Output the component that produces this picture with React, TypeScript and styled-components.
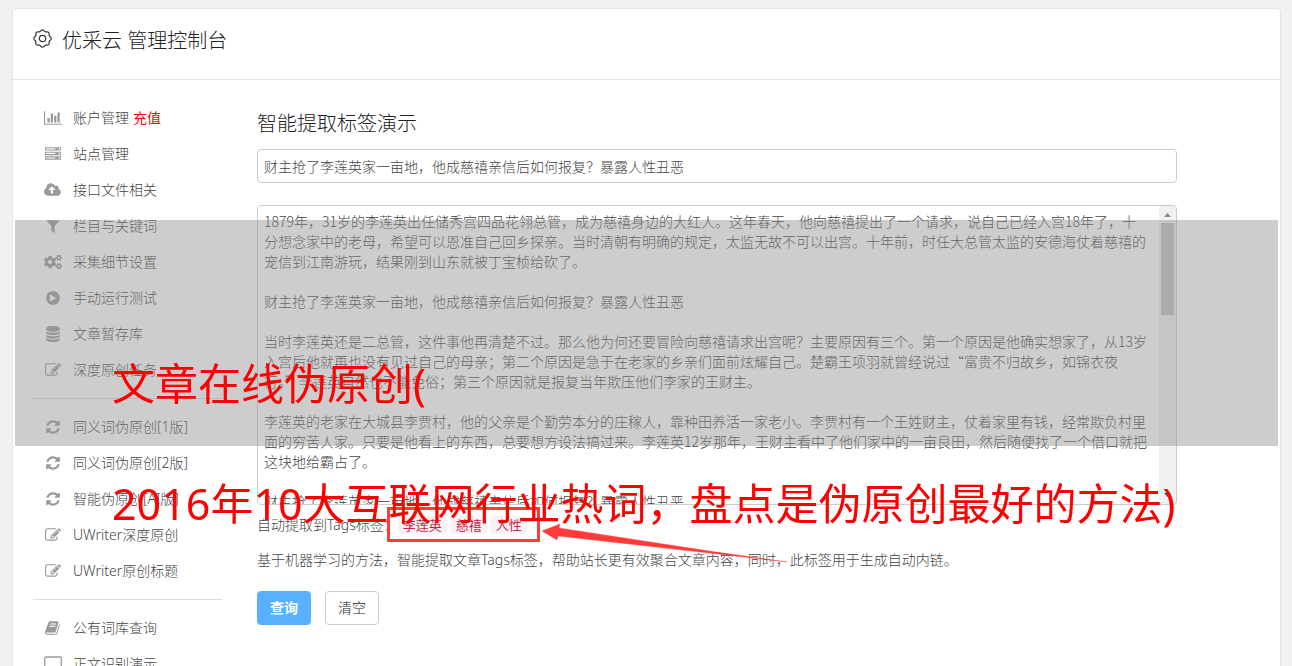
import React from "react";
import styled, { createGlobalStyle } from "styled-components";
import { FaCogs } from "react-icons/fa";

const latinFirst = `"Noto Sans", "Noto Sans CJK SC", sans-serif`;
const hanFirst = `"Noto Sans CJK SC", sans-serif`;

const GlobalStyle = createGlobalStyle`
  * { box-sizing: border-box; }
  html { background: #f1f1f1; }
  body {
    margin: 0;
    height: 100vh;
    overflow: hidden;
    font: 300 14px/20px ${latinFirst};
    color: #444;
  }
  button, input, textarea { font: inherit; color: inherit; }
`;

const Page = styled.div`
  position: relative;
  padding: 8px 11px 0 12px;
`;

const Panel = styled.div`
  background: #fff;
  border: 1px solid #e4e4e4;
  border-radius: 4px;
`;

const Header = styled.header`
  display: flex;
  align-items: flex-start;
  gap: 10px;
  height: 71px;
  padding: 20px;
  border-bottom: 1px solid #e4e4e4;
`;

const Title = styled.h1`
  margin: 0;
  font-size: 20px;
  line-height: 24px;
  font-weight: 300;
  color: #222;
`;

const Columns = styled.div`
  display: flex;
  align-items: flex-start;
  gap: 35px;
  padding: 20px;
`;

const Sidebar = styled.nav`
  flex: none;
  width: 189px;
`;

const Group = styled.ul`
  list-style: none;
  margin: 0;
  padding: 0;

  & + & {
    margin-top: 10px;
    padding-top: 10px;
    border-top: 1px solid #ddd;
  }
`;

const Item = styled.a`
  display: flex;
  align-items: center;
  gap: 10px;
  height: 36px;
  padding-left: 10px;
  color: #444;
  text-decoration: none;
  white-space: pre;
`;

const IconCell = styled.span`
  display: flex;
  justify-content: center;
  width: 20px;
  color: #999;
`;

const Hot = styled.span`
  margin-left: -6px;
  color: #f00;
  font-weight: 400;
`;

const Main = styled.main`
  flex: 1;
  min-width: 0;
  padding-right: 83px;
`;

const Heading = styled.h2`
  margin: 0 0 11px;
  padding-top: 10px;
  font-size: 20px;
  line-height: 28px;
  font-weight: 300;
  color: #222;
`;

const TextInput = styled.input`
  display: block;
  width: 100%;
  height: 34px;
  padding: 0 6px;
  border: 1px solid #ccc;
  border-radius: 4px;
  font-family: ${hanFirst};
`;

const Editor = styled.div`
  display: flex;
  height: 300px;
  margin-top: 22px;
  border: 1px solid #ccc;
  border-radius: 4px;
  overflow: hidden;
`;

const TextArea = styled.textarea`
  flex: 1;
  min-width: 0;
  padding: 5px 11px 0 6px;
  border: 0;
  outline: 0;
  resize: none;
  font-family: ${hanFirst};
  scrollbar-width: none;
`;

const ScrollBar = styled.div`
  display: flex;
  flex-direction: column;
  align-items: center;
  width: 17px;
  background: #f1f1f1;
`;

const ScrollArrow = styled.svg`
  flex: none;
  width: 17px;
  height: 17px;
`;

const Thumb = styled.div`
  width: 13px;
  height: 92px;
  margin-bottom: auto;
  background: #c1c1c1;
`;

const TagRow = styled.div`
  display: flex;
  align-items: center;
  height: 40px;
`;

const Tags = styled.div`
  position: relative;
  display: flex;
  gap: 4px;
`;

const Tag = styled.code`
  padding: 0 5px;
  border-radius: 4px;
  background: #f9f2f4;
  color: #c7254e;
  font: 400 13px/18px ${hanFirst};
`;

const Marker = styled.div`
  position: absolute;
  inset: -9px -13px -8px -11px;
  border: 3px solid #ff3a3a;
`;

const Arrow = styled.svg`
  position: absolute;
  left: 100%;
  top: 0;
  width: 264px;
  height: 50px;
`;

const Note = styled.p`
  margin: 5px 0 21px;
`;

const Actions = styled.div`
  display: flex;
  gap: 14px;
`;

const Button = styled.button<{ $primary?: boolean }>`
  width: 54px;
  height: 34px;
  padding: 0;
  border: 1px solid ${(p) => (p.$primary ? "#58b0ff" : "#ccc")};
  border-radius: 4px;
  background: ${(p) => (p.$primary ? "#58b0ff" : "#fff")};
  color: ${(p) => (p.$primary ? "#fff" : "#222")};
  font-weight: ${(p) => (p.$primary ? 700 : 300)};
`;

const Banner = styled.div`
  position: absolute;
  z-index: 1;
  top: 220px;
  left: 15px;
  right: 14px;
  height: 226px;
  background: rgba(145, 145, 145, 0.46);
`;

const Caption = styled.div`
  position: absolute;
  z-index: 2;
  top: 324px;
  left: 112px;
  font-size: 43px;
  line-height: 120px;
  font-weight: 400;
  color: #f00;
  white-space: nowrap;
`;

const Glyph = ({ w = 1792, d }: { w?: number; d: string }) => (
  <svg width={Math.round(w / 112)} height="16" viewBox={`0 0 ${w} 1792`} fill="currentColor" aria-hidden="true">
    <path d={d} />
  </svg>
);

const BarChart = () => (
  <Glyph w={2048} d="M640 896v512h-256v-512h256zM1024 384v1024h-256v-1024h256zM2048 1536v128h-2048v-1536h128v1408h1920zM1408 640v768h-256v-768h256zM1792 256v1152h-256v-1152h256z" />
);
const Server = () => (
  <Glyph d="M128 1408h1024v-128h-1024v128zM128 896h1024v-128h-1024v128zM1696 1344q0-40-28-68t-68-28-68 28-28 68 28 68 68 28 68-28 28-68zM128 384h1024v-128h-1024v128zM1696 832q0-40-28-68t-68-28-68 28-28 68 28 68 68 28 68-28 28-68zM1696 320q0-40-28-68t-68-28-68 28-28 68 28 68 68 28 68-28 28-68zM1792 1152v384h-1792v-384h1792zM1792 640v384h-1792v-384h1792zM1792 128v384h-1792v-384h1792z" />
);
const CloudUpload = () => (
  <Glyph w={2048} d="M1280 864q0-14-9-23l-352-352q-9-9-23-9t-23 9l-351 351q-10 12-10 24 0 14 9 23t23 9h224v352q0 13 9.5 22.5t22.5 9.5h192q13 0 22.5-9.5t9.5-22.5v-352h224q13 0 22.5-9.5t9.5-22.5zM1920 1152q0 159-112.5 271.5t-271.5 112.5h-1088q-185 0-316.5-131.5t-131.5-316.5q0-130 70-240t188-165q-2-30-2-43 0-212 150-362t362-150q156 0 285.5 87t188.5 231q71-62 166-62 106 0 181 75t75 181q0 76-41 138 130 31 213.5 135.5t83.5 238.5z" />
);
const Filter = () => (
  <Glyph d="M1595 295q17 41-14 70l-493 493v742q0 42-39 59-13 5-25 5-27 0-45-19l-256-256q-19-19-19-45v-486l-493-493q-31-29-14-70 17-39 59-39h1280q42 0 59 39z" />
);
const PlayCircle = () => (
  <Glyph d="M896 128q209 0 385.5 103t279.5 279.5 103 385.5-103 385.5-279.5 279.5-385.5 103-385.5-103-279.5-279.5-103-385.5 103-385.5 279.5-279.5 385.5-103zM1184 951q32-18 32-55t-32-55l-544-320q-31-19-64-1-32 19-32 56v640q0 37 32 56 16 8 32 8 17 0 32-9z" />
);
const Database = () => (
  <Glyph d="M896 768q237 0 443-43t325-127v170q0 69-103 128t-280 93.5-385 34.5-385-34.5-280-93.5-103-128v-170q119 84 325 127t443 43zM896 1536q237 0 443-43t325-127v170q0 69-103 128t-280 93.5-385 34.5-385-34.5-280-93.5-103-128v-170q119 84 325 127t443 43zM896 1152q237 0 443-43t325-127v170q0 69-103 128t-280 93.5-385 34.5-385-34.5-280-93.5-103-128v-170q119 84 325 127t443 43zM896 0q208 0 385 34.5t280 93.5 103 128v128q0 69-103 128t-280 93.5-385 34.5-385-34.5-280-93.5-103-128v-128q0-69 103-128t280-93.5 385-34.5z" />
);
const Edit = () => (
  <Glyph d="M888 1184l116-116-152-152-116 116v56h96v96h56zM1328 464q-16-16-33 1l-350 350q-17 17-1 33t33-1l350-350q17-17 1-33zM1408 1058v190q0 119-84.5 203.5t-203.5 84.5h-832q-119 0-203.5-84.5t-84.5-203.5v-832q0-119 84.5-203.5t203.5-84.5h832q63 0 117 25 15 7 18 23 3 17-9 29l-49 49q-14 14-32 8-23-6-45-6h-832q-66 0-113 47t-47 113v832q0 66 47 113t113 47h832q66 0 113-47t47-113v-126q0-13 9-22l64-64q15-15 35-7t20 29zM1312 320l288 288-672 672h-288v-288zM1756 452l-92 92-288-288 92-92q28-28 68-28t68 28l152 152q28 28 28 68t-28 68z" />
);
const Refresh = () => (
  <Glyph d="M1639 1056q0 5-1 7-64 268-268 434.5t-478 166.5q-146 0-282.5-55t-243.5-157l-129 129q-19 19-45 19t-45-19-19-45v-448q0-26 19-45t45-19h448q26 0 45 19t19 45-19 45l-137 137q71 66 161 102t187 36q134 0 250-65t186-179q11-17 53-117 8-23 30-23h192q13 0 22.5 9.5t9.5 22.5zM1664 256v448q0 26-19 45t-45 19h-448q-26 0-45-19t-19-45 19-45l138-138q-148-137-349-137-134 0-250 65t-186 179q-11 17-53 117-8 23-30 23h-199q-13 0-22.5-9.5t-9.5-22.5v-7q65-268 270-434.5t480-166.5q146 0 284 55.5t245 156.5l130-129q19-19 45-19t45 19 19 45z" />
);
const Book = () => (
  <Glyph d="M1639 478q40 57 18 129l-275 906q-19 64-76.5 107.5t-122.5 43.5h-923q-77 0-148.5-53.5t-99.5-131.5q-24-67-2-127 0-4 3-27t4-37q1-8-3-21.5t-3-19.5q2-11 8-21t16.5-23.5 16.5-23.5q23-38 45-91.5t30-91.5q3-10 .5-30t-.5-28q3-11 17-28t17-23q21-36 42-92t25-90q1-9-2.500-32t.5-28q4-13 22-30.500t22-22.500q19-26 42.500-84.500t27.500-96.500q1-8-3-25.500t-2-26.500q2-8 9-18t18-23 17-21q8-12 16.500-30.500t15-35 16-36 19.500-32 26.500-23.500 36-11.500 47.500 5.500l-1 3q38-9 51-9h761q74 0 114 56t18 130l-274 906q-36 119-71.500 153.500t-128.500 34.500h-869q-27 0-38 15-11 16-1 43 24 70 144 70h923q29 0 56-15.500t35-41.500l300-987q7-22 5-57 38 15 59 43zM575 480q-4 13 2 22.500t20 9.500h608q13 0 25.500-9.500t16.500-22.500l21-64q4-13-2-22.500t-20-9.500h-608q-13 0-25.500 9.500t-16.500 22.500zM492 736q-4 13 2 22.500t20 9.500h608q13 0 25.500-9.500t16.500-22.500l21-64q4-13-2-22.500t-20-9.500h-608q-13 0-25.500 9.500t-16.500 22.500z" />
);
const Screen = () => (
  <svg width="18" height="16" viewBox="0 0 18 16" fill="none" stroke="currentColor" strokeWidth="1.3" aria-hidden="true">
    <rect x=".7" y="1" width="16.6" height="12" rx="1.4" />
    <path d="M6 15.3h6" />
  </svg>
);

const gearOutline = Array.from({ length: 73 }, (_, i) => {
  const a = (i * Math.PI) / 36;
  const r = 8 + 0.7 * Math.cos(8 * a);
  return `${i ? "L" : "M"}${(9.5 + r * Math.cos(a)).toFixed(2)} ${(9.5 + r * Math.sin(a)).toFixed(2)}`;
}).join("");

const Gear = () => (
  <svg width="19" height="19" viewBox="0 0 19 19" fill="none" stroke="#333" strokeWidth="1.2" aria-hidden="true">
    <path d={gearOutline + "Z"} />
    <circle cx="9.5" cy="9.5" r="3.2" />
  </svg>
);

type Entry = { label: string; icon: React.ReactNode; hot?: string };

const groups: Entry[][] = [
  [
    { label: "账户管理", icon: <BarChart />, hot: "充值" },
    { label: "站点管理", icon: <Server /> },
    { label: "接口文件相关", icon: <CloudUpload /> },
    { label: "栏目与关键词", icon: <Filter /> },
    { label: "采集细节设置", icon: <FaCogs size={18} /> },
    { label: "手动运行测试", icon: <PlayCircle /> },
    { label: "文章暂存库", icon: <Database /> },
    { label: "深度原创任务", icon: <Edit /> },
  ],
  [
    { label: "同义词伪原创[1版]", icon: <Refresh /> },
    { label: "同义词伪原创[2版]", icon: <Refresh /> },
    { label: "智能伪原创[AI版]", icon: <Refresh /> },
    { label: "UWriter深度原创", icon: <Edit /> },
    { label: "UWriter原创标题", icon: <Edit /> },
  ],
  [
    { label: "公有词库查询", icon: <Book /> },
    { label: "正文识别演示", icon: <Screen /> },
  ],
];

const headline = "财主抢了李莲英家一亩地，他成慈禧亲信后如何报复？暴露人性丑恶";

const article = [
  "1879年，31岁的李莲英出任储秀宫四品花翎总管，成为慈禧身边的大红人。这年春天，他向慈禧提出了一个请求，说自己已经入宫18年了，十分想念家中的老母，希望可以恩准自己回乡探亲。当时清朝有明确的规定，太监无故不可以出宫。十年前，时任大总管太监的安德海仗着慈禧的宠信到江南游玩，结果刚到山东就被丁宝桢给砍了。",
  headline,
  "当时李莲英还是二总管，这件事他再清楚不过。那么他为何还要冒险向慈禧请求出宫呢？主要原因有三个。第一个原因是他确实想家了，从13岁入宫后他就再也没有见过自己的母亲；第二个原因是急于在老家的乡亲们面前炫耀自己。楚霸王项羽就曾经说过“富贵不归故乡，如锦衣夜行。”李莲英自然也不能免俗；第三个原因就是报复当年欺压他们李家的王财主。",
  "李莲英的老家在大城县李贾村，他的父亲是个勤劳本分的庄稼人，靠种田养活一家老小。李贾村有一个王姓财主，仗着家里有钱，经常欺负村里面的穷苦人家。只要是他看上的东西，总要想方设法搞过来。李莲英12岁那年，王财主看中了他们家中的一亩良田，然后随便找了一个借口就把这块地给霸占了。",
  headline,
].join("\n\n");

export default function App() {
  return (
    <Page>
      <GlobalStyle />
      <Panel>
        <Header>
          <Gear />
          <Title>优采云 管理控制台</Title>
        </Header>
        <Columns>
          <Sidebar>
            {groups.map((group, i) => (
              <Group key={i}>
                {group.map((entry) => (
                  <li key={entry.label}>
                    <Item href="#">
                      <IconCell>{entry.icon}</IconCell>
                      {entry.label}
                      {entry.hot && <Hot>{entry.hot}</Hot>}
                    </Item>
                  </li>
                ))}
              </Group>
            ))}
          </Sidebar>
          <Main>
            <Heading>智能提取标签演示</Heading>
            <TextInput aria-label="标题" defaultValue={headline} />
            <Editor>
              <TextArea aria-label="正文" defaultValue={article} spellCheck={false} />
              <ScrollBar aria-hidden="true">
                <ScrollArrow viewBox="0 0 17 17">
                  <path d="M5 11l3.500-4 3.500 4z" fill="#888" />
                </ScrollArrow>
                <Thumb />
                <ScrollArrow viewBox="0 0 17 17">
                  <path d="M5 6l3.500 4 3.500-4z" fill="#505050" />
                </ScrollArrow>
              </ScrollBar>
            </Editor>
            <TagRow>
              自动提取到Tags标签：
              <Tags>
                <Tag>李莲英</Tag>
                <Tag>慈禧</Tag>
                <Tag>人性</Tag>
                <Marker />
                <Arrow viewBox="0 0 264 50" aria-hidden="true">
                  <path d="M15 15L33 8L32 12L182 35L260 46L182 37L31 20L30 24Z" fill="#ff3a3a" stroke="#ff3a3a" strokeWidth=".4" />
                </Arrow>
              </Tags>
            </TagRow>
            <Note>基于机器学习的方法，智能提取文章Tags标签，帮助站长更有效聚合文章内容，同时，此标签用于生成自动内链。</Note>
            <Actions>
              <Button type="button" $primary>查询</Button>
              <Button type="button">清空</Button>
            </Actions>
          </Main>
        </Columns>
      </Panel>
      <Banner />
      <Caption>
        文章在线伪原创(
        <br />
        2016年10大互联网行业热词，盘点是伪原创最好的方法)
      </Caption>
    </Page>
  );
}
